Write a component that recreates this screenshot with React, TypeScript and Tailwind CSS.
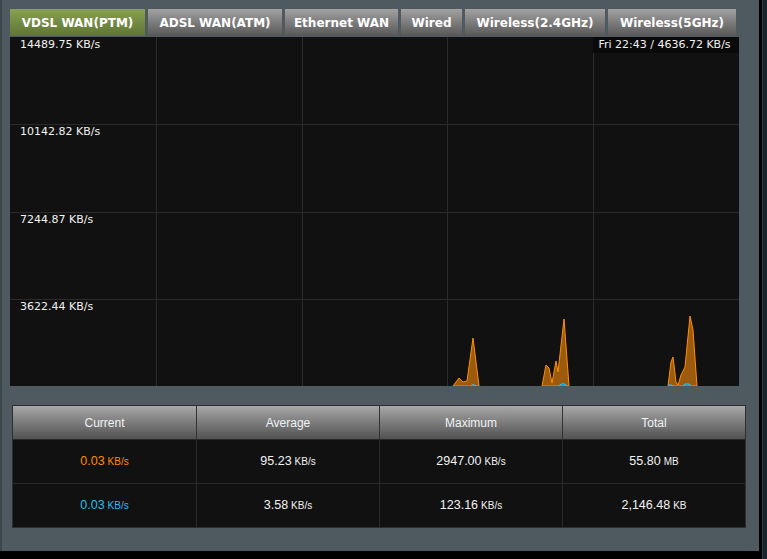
const tabs = [
  { label: 'VDSL WAN(PTM)', w: 'w-[135px]', active: true },
  { label: 'ADSL WAN(ATM)', w: 'w-[134px]' },
  { label: 'Ethernet WAN', w: 'w-[113px]' },
  { label: 'Wired', w: 'w-[61px]' },
  { label: 'Wireless(2.4GHz)', w: 'w-[140px]' },
  { label: 'Wireless(5GHz)', w: 'w-[128px]' },
];

const yLabels = [
  { text: '14489.75 KB/s', top: 'top-[1px]' },
  { text: '10142.82 KB/s', top: 'top-[88px]' },
  { text: '7244.87 KB/s', top: 'top-[176px]' },
  { text: '3622.44 KB/s', top: 'top-[263px]' },
];

// chart coords: 729 x 349, bottom at 349
const rxPath =
  'M443,349 L449,341 L453,345 L457,344 L463,301 L469,349 Z ' +
  'M532,349 L536,328 L539,331 L542,346 L546,324 L548,335 L554,282 L559,349 Z ' +
  'M658,349 L661,325 L663,320 L666,345 L668,348 L671,338 L675,330 L680,279 L683,293 L687,349 Z';

const txPath =
  'M461,349 L463,347.5 L466,349 Z ' +
  'M549,349 L551,347 L555,347 L557,349 Z ' +
  'M658,349 L660,347.5 L663,349 Z ' +
  'M673,349 L675,347 L679,347 L681,349 Z';

const rows = [
  {
    color: 'text-[#ff8c00]',
    cells: [
      ['0.03', 'KB/s'],
      ['95.23', 'KB/s'],
      ['2947.00', 'KB/s'],
      ['55.80', 'MB'],
    ],
  },
  {
    color: 'text-[#33bbee]',
    cells: [
      ['0.03', 'KB/s'],
      ['3.58', 'KB/s'],
      ['123.16', 'KB/s'],
      ['2,146.48', 'KB'],
    ],
  },
];

function Chart() {
  return (
    <div className="relative h-[349px] w-[729px] bg-[#111111]">
      <svg width="729" height="349" className="block">
        {[146, 292, 437, 583].map((x) => (
          <line key={x} x1={x + 0.5} y1="0" x2={x + 0.5} y2="349" stroke="#2b2b2b" strokeWidth="1" />
        ))}
        {[87, 175, 262].map((y) => (
          <line key={y} x1="0" y1={y + 0.5} x2="729" y2={y + 0.5} stroke="#2b2b2b" strokeWidth="1" />
        ))}
        <path d={rxPath} fill="#9c5a0e" stroke="#ff9000" strokeWidth="1" strokeLinejoin="round" />
        <path d={txPath} fill="#1f7f99" stroke="#33c6f0" strokeWidth="1" />
      </svg>
      {yLabels.map((l) => (
        <span
          key={l.text}
          className={`absolute left-[10px] ${l.top} font-['DejaVu_Sans',sans-serif] text-[11px] leading-[14px] text-[#f2f2f2]`}
        >
          {l.text}
        </span>
      ))}
      <div className="absolute right-0 top-0 flex h-[16px] w-[146px] items-center justify-center bg-[#0a0a0a] pr-[3px] font-['DejaVu_Sans',sans-serif] text-[11px] text-[#f2f2f2]">
        Fri 22:43 / 4636.72 KB/s
      </div>
    </div>
  );
}

function StatsTable() {
  return (
    <div className="ml-[2px] w-[734px] border border-[#2e2e2e] font-['Liberation_Sans',Arial,sans-serif]">
      <div className="grid h-[33px] grid-cols-4 bg-linear-to-b from-[#a8a8a8] to-[#525252]">
        {['Current', 'Average', 'Maximum', 'Total'].map((h, i) => (
          <div
            key={h}
            className={`flex items-center justify-center text-[12px] text-[#eef3f6] ${i > 0 ? 'border-l border-[#333333]' : ''}`}
          >
            {h}
          </div>
        ))}
      </div>
      {rows.map((r, ri) => (
        <div key={ri} className="grid h-[44px] grid-cols-4 border-t border-[#2a2a2a] bg-[#111111]">
          {r.cells.map(([v, u], i) => (
            <div
              key={i}
              className={`flex items-center justify-center gap-[3px] ${i > 0 ? 'border-l border-[#2a2a2a]' : ''} ${i === 0 ? r.color : 'text-[#f2f2f2]'}`}
            >
              <span className="text-[12.5px]">{v}</span>
              <span className="text-[10px]">{u}</span>
            </div>
          ))}
        </div>
      ))}
    </div>
  );
}

export default function App() {
  return (
    <div className="flex h-[559px] w-[767px] bg-black">
      <div className="flex h-[551px] w-[759px] flex-col border-l-2 border-[#3d484c] bg-[#4e5a5f] pl-[8px] pt-[9px]">
        <div className="flex gap-[3px] font-['DejaVu_Sans',sans-serif] text-[12px] font-bold text-white">
          {tabs.map((t) => (
            <div
              key={t.label}
              className={`flex h-[27px] ${t.w} items-center justify-center pt-[1px] ${
                t.active
                  ? 'bg-linear-to-b from-[#89a152] to-[#5f7535]'
                  : 'bg-linear-to-b from-[#a2a2a2] to-[#585858]'
              }`}
            >
              {t.label}
            </div>
          ))}
        </div>
        <div className="mt-[1px]">
          <Chart />
        </div>
        <div className="mt-[19px]">
          <StatsTable />
        </div>
      </div>
      <div className="ml-[3px] h-full w-[5px] border-l border-[#2a3a44] bg-[#18252d]" />
    </div>
  );
}
